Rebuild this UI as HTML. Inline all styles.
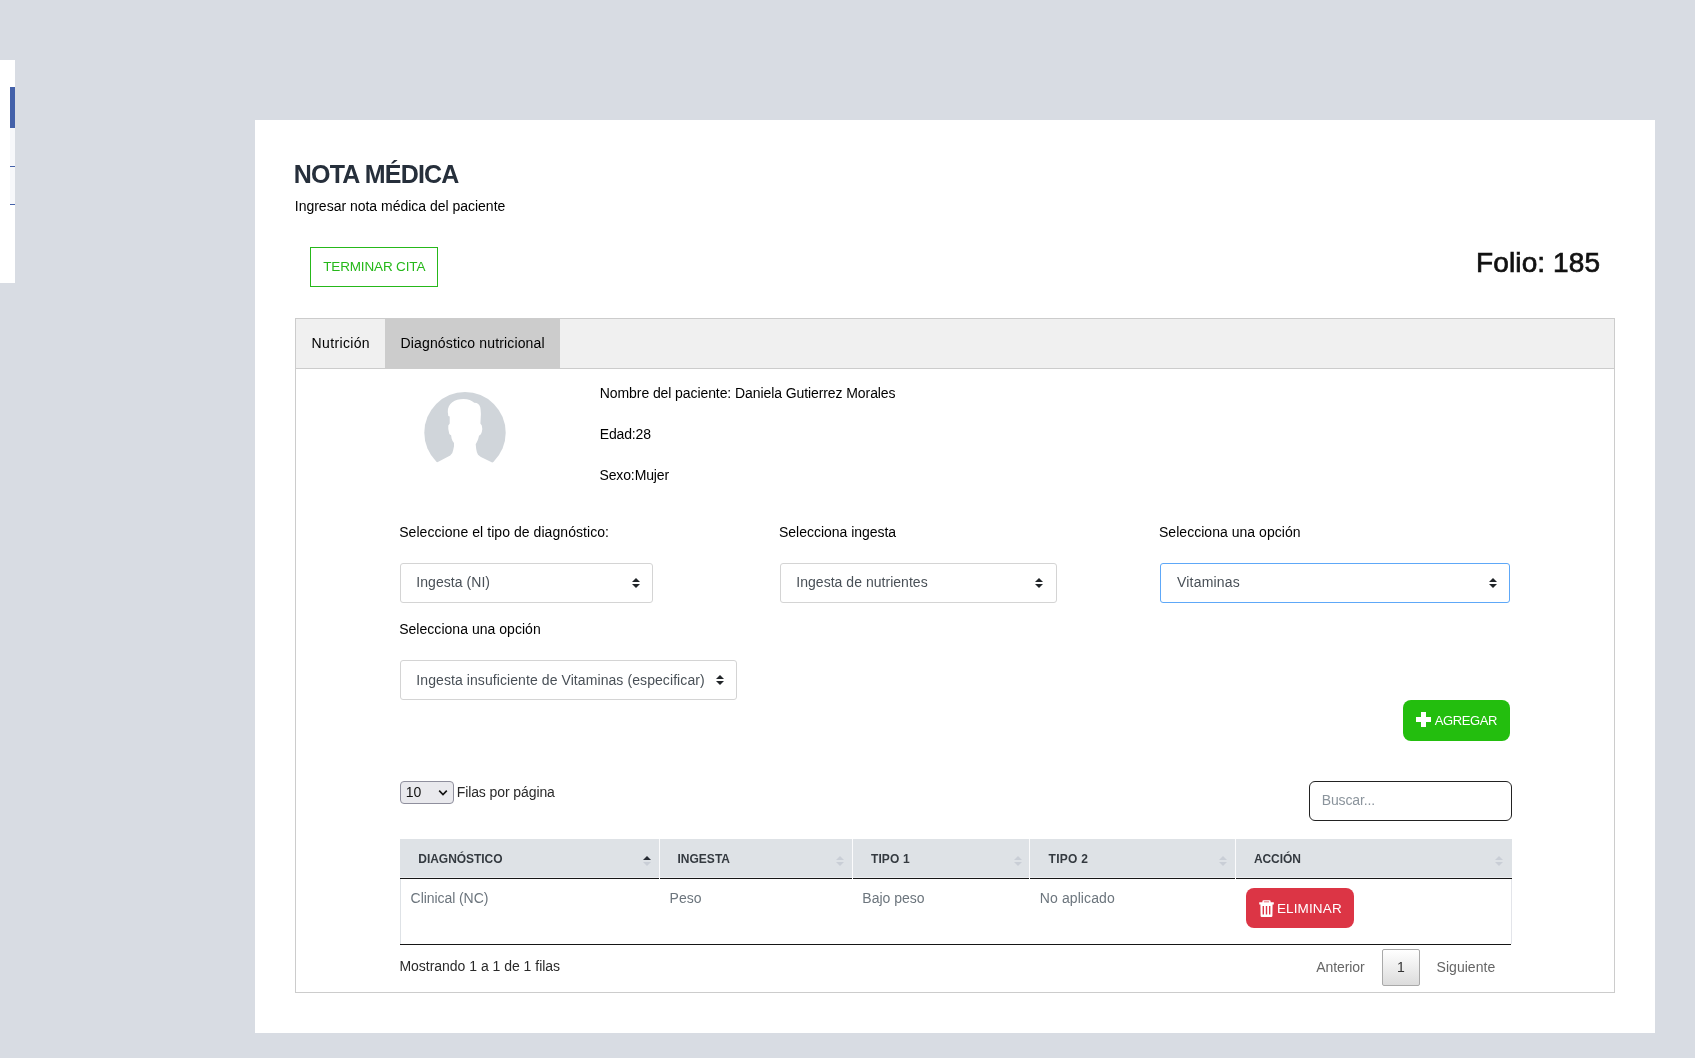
<!DOCTYPE html>
<html><head><meta charset="utf-8">
<style>
*{box-sizing:border-box;margin:0;padding:0}
html,body{width:1695px;height:1058px;overflow:hidden}
body{background:#d8dce3;font-family:"Liberation Sans",sans-serif;position:relative}
.a{position:absolute}
.t{position:absolute;white-space:nowrap;line-height:1}
.tu,.td{position:absolute;width:0;height:0;border-left-style:solid;border-right-style:solid;border-left-color:transparent;border-right-color:transparent}
</style></head><body>
<div class="a" style="left:0;top:60px;width:15px;height:223px;background:#fff"></div>
<div class="a" style="left:10px;top:87px;width:5px;height:41px;background:#4461a9"></div>
<div class="a" style="left:10px;top:128px;width:5px;height:77px;background:#f7f8fb"></div>
<div class="a" style="left:10px;top:166px;width:5px;height:1px;background:#4461a9"></div>
<div class="a" style="left:10px;top:204px;width:5px;height:1px;background:#4461a9"></div>
<div class="a" style="left:255px;top:120px;width:1400px;height:913px;background:#fff"></div>
<div class="a" style="left:310px;top:247px;width:128px;height:40px;border:1px solid #26b81a"></div>
<div class="a" style="left:295px;top:318px;width:1320px;height:675px;border:1px solid #cccccc"></div>
<div class="a" style="left:296px;top:319px;width:1318px;height:50px;background:#f0f0f0;border-bottom:1px solid #cccccc"></div>
<div class="a" style="left:385px;top:319px;width:175px;height:49px;background:#cccccc"></div>
<svg class="a" style="left:420px;top:388px" width="90" height="90" viewBox="0 0 90 90">
<defs><clipPath id="cc"><circle cx="45" cy="44.7" r="40.7"/></clipPath></defs>
<circle cx="45" cy="44.7" r="40.7" fill="#d0d5da"/>
<path fill="#fff" d="M17.4 74.2 L30.2 67.6 Q32.8 65.5 33.2 62 L34 58.2 L34 54.9 Q32 52.5 31.6 50.6 L31.1 47.3 Q29.4 46.5 29.2 45.5 L28.3 41.1 L28.3 37.4 L29.7 35.5 L29.7 28.4 L28.3 27.9 L27.8 24.1 C27.5 15 35 10.9 43.4 10.9 C48.5 10.9 51.5 12.5 54.3 14.7 L56.5 15 C59.3 16 60.4 18.5 60.6 21.5 L60.9 26 L60.4 35.5 L61.8 37.4 L62.3 41.1 Q62 44.5 60.9 46.3 L59 47.8 Q58.3 51 57.6 52.5 Q56.5 54.8 55.7 56.3 L56.2 61 Q56.8 65 58 66.7 L60.9 69 L72.7 74.7 L90 90 L0 90 Z"/>
</svg>
<div class="a" style="left:400px;top:563px;width:253px;height:40px;border:1px solid #d4d4d4;border-radius:3px;background:#fff"></div>
<div class="a" style="left:780px;top:563px;width:277px;height:40px;border:1px solid #d4d4d4;border-radius:3px;background:#fff"></div>
<div class="a" style="left:1160px;top:563px;width:350px;height:40px;border:1px solid #5ea8f8;border-radius:3px;background:#fff"></div>
<div class="a" style="left:400px;top:660px;width:337px;height:40px;border:1px solid #d4d4d4;border-radius:3px;background:#fff"></div>
<div class="tu" style="left:632px;top:578px;border-left-width:4.0px;border-right-width:4.0px;border-bottom:4px solid #212529"></div><div class="td" style="left:632px;top:584px;border-left-width:4.0px;border-right-width:4.0px;border-top:4px solid #212529"></div>
<div class="tu" style="left:1035px;top:578px;border-left-width:4.0px;border-right-width:4.0px;border-bottom:4px solid #212529"></div><div class="td" style="left:1035px;top:584px;border-left-width:4.0px;border-right-width:4.0px;border-top:4px solid #212529"></div>
<div class="tu" style="left:1489px;top:578px;border-left-width:4.0px;border-right-width:4.0px;border-bottom:4px solid #212529"></div><div class="td" style="left:1489px;top:584px;border-left-width:4.0px;border-right-width:4.0px;border-top:4px solid #212529"></div>
<div class="tu" style="left:716px;top:675px;border-left-width:4.0px;border-right-width:4.0px;border-bottom:4px solid #212529"></div><div class="td" style="left:716px;top:681px;border-left-width:4.0px;border-right-width:4.0px;border-top:4px solid #212529"></div>
<div class="a" style="left:1403px;top:700px;width:107px;height:41px;border-radius:8px;background:#23be0e"></div>
<div class="a" style="left:1416px;top:717px;width:15px;height:5px;background:#fff"></div>
<div class="a" style="left:1421px;top:712px;width:5px;height:15px;background:#fff"></div>
<div class="a" style="left:400px;top:781px;width:54px;height:23px;border:1px solid #8f8f9d;border-radius:4px;background:#e9e9ed"></div>
<svg class="a" style="left:438px;top:789px" width="10" height="8" viewBox="0 0 10 8"><path d="M1.2 1.6 L5 5.6 L8.8 1.6" fill="none" stroke="#111" stroke-width="1.6"/></svg>
<div class="a" style="left:1309px;top:781px;width:203px;height:40px;border:1px solid #222;border-radius:6px;background:#fff"></div>
<div class="a" style="left:400px;top:839px;width:1112px;height:39px;background:#dee2e6"></div>
<div class="a" style="left:400px;top:877px;width:1112px;height:1px;background:#eceef1"></div>
<div class="a" style="left:400px;top:878px;width:1112px;height:1px;background:#161616"></div>
<div class="a" style="left:659px;top:839px;width:1px;height:40px;background:#fbfbfc"></div>
<div class="a" style="left:852px;top:839px;width:1px;height:40px;background:#fbfbfc"></div>
<div class="a" style="left:1029px;top:839px;width:1px;height:40px;background:#fbfbfc"></div>
<div class="a" style="left:1235px;top:839px;width:1px;height:40px;background:#fbfbfc"></div>
<div class="tu" style="left:643px;top:856px;border-left-width:4.0px;border-right-width:4.0px;border-bottom:4px solid #262b33"></div><div class="td" style="left:643px;top:862px;border-left-width:4.0px;border-right-width:4.0px;border-top:4px solid #c9ced6"></div>
<div class="tu" style="left:836px;top:856px;border-left-width:4.0px;border-right-width:4.0px;border-bottom:4px solid #c9ced6"></div><div class="td" style="left:836px;top:862px;border-left-width:4.0px;border-right-width:4.0px;border-top:4px solid #c9ced6"></div>
<div class="tu" style="left:1014px;top:856px;border-left-width:4.0px;border-right-width:4.0px;border-bottom:4px solid #c9ced6"></div><div class="td" style="left:1014px;top:862px;border-left-width:4.0px;border-right-width:4.0px;border-top:4px solid #c9ced6"></div>
<div class="tu" style="left:1219px;top:856px;border-left-width:4.0px;border-right-width:4.0px;border-bottom:4px solid #c9ced6"></div><div class="td" style="left:1219px;top:862px;border-left-width:4.0px;border-right-width:4.0px;border-top:4px solid #c9ced6"></div>
<div class="tu" style="left:1495px;top:856px;border-left-width:4.0px;border-right-width:4.0px;border-bottom:4px solid #c9ced6"></div><div class="td" style="left:1495px;top:862px;border-left-width:4.0px;border-right-width:4.0px;border-top:4px solid #c9ced6"></div>
<div class="a" style="left:400px;top:879px;width:1px;height:65px;background:#dee2e6"></div>
<div class="a" style="left:1511px;top:879px;width:1px;height:65px;background:#e3e5ea"></div>
<div class="a" style="left:400px;top:944px;width:1111px;height:1px;background:#161616"></div>
<div class="a" style="left:1246px;top:888px;width:108px;height:40px;border-radius:8px;background:#dc3545"></div>
<svg class="a" style="left:1258px;top:899px" width="17" height="19" viewBox="0 0 17 19">
<path fill="#fff" fill-rule="evenodd" d="M5.5 1.2 L11.5 1.2 Q12.6 1.2 12.6 2.3 L12.6 3.2 L15.8 3.2 L15.8 5.5 L14.6 5.5 L14.4 17 Q14.3 18 13.3 18 L3.7 18 Q2.7 18 2.6 17 L2.4 5.5 L1.2 5.5 L1.2 3.2 L4.4 3.2 L4.4 2.3 Q4.4 1.2 5.5 1.2 Z M5.9 3.2 L11.1 3.2 L11.1 2.5 L5.9 2.5 Z M4.6 7 L4.6 15.5 L6 15.5 L6 7 Z M7.8 7 L7.8 15.5 L9.2 15.5 L9.2 7 Z M11 7 L11 15.5 L12.4 15.5 L12.4 7 Z"/>
</svg>
<div class="a" style="left:1382px;top:949px;width:38px;height:37px;border:1px solid #a9a9a9;border-radius:2px;background:linear-gradient(#ffffff,#dcdcdc)"></div>
<div style="position:absolute;left:0;top:0;width:1695px;height:1058px;will-change:transform">
<div class="t" style="left:293.8px;top:162.1px;font-size:25px;font-weight:bold;color:#262f3b;letter-spacing:-0.8px;">NOTA MÉDICA</div>
<div class="t" style="left:294.8px;top:198.7px;font-size:14px;font-weight:normal;color:#000000;letter-spacing:-0.013px;">Ingresar nota médica del paciente</div>
<div class="t" style="left:323.2px;top:260.2px;font-size:13.5px;font-weight:normal;color:#26b81a;letter-spacing:-0.15px;">TERMINAR CITA</div>
<div class="t" style="left:1476.1px;top:248.9px;font-size:28px;font-weight:normal;color:#111111;letter-spacing:0.111px;-webkit-text-stroke:0.7px #111111">Folio: 185</div>
<div class="t" style="left:311.6px;top:336.3px;font-size:14px;font-weight:normal;color:#000000;letter-spacing:0.349px;">Nutrición</div>
<div class="t" style="left:400.5px;top:336.3px;font-size:14px;font-weight:normal;color:#000000;letter-spacing:0.146px;">Diagnóstico nutricional</div>
<div class="t" style="left:599.8px;top:386.3px;font-size:14px;font-weight:normal;color:#000000;letter-spacing:-0.085px;">Nombre del paciente: Daniela Gutierrez Morales</div>
<div class="t" style="left:599.8px;top:427.1px;font-size:14px;font-weight:normal;color:#000000;letter-spacing:-0.167px;">Edad:28</div>
<div class="t" style="left:599.5px;top:468.0px;font-size:14px;font-weight:normal;color:#000000;letter-spacing:-0.134px;">Sexo:Mujer</div>
<div class="t" style="left:399.2px;top:524.8px;font-size:14px;font-weight:normal;color:#000000;letter-spacing:0.06px;">Seleccione el tipo de diagnóstico:</div>
<div class="t" style="left:779.0px;top:524.8px;font-size:14px;font-weight:normal;color:#000000;letter-spacing:-0.023px;">Selecciona ingesta</div>
<div class="t" style="left:1159.0px;top:524.8px;font-size:14px;font-weight:normal;color:#000000;letter-spacing:0.03px;">Selecciona una opción</div>
<div class="t" style="left:416.3px;top:575.2px;font-size:14px;font-weight:normal;color:#495057;letter-spacing:0.054px;">Ingesta (NI)</div>
<div class="t" style="left:796.3px;top:575.1px;font-size:14px;font-weight:normal;color:#495057;letter-spacing:0.03px;">Ingesta de nutrientes</div>
<div class="t" style="left:1177.0px;top:575.0px;font-size:14px;font-weight:normal;color:#495057;letter-spacing:0.199px;">Vitaminas</div>
<div class="t" style="left:399.2px;top:622.2px;font-size:14px;font-weight:normal;color:#000000;letter-spacing:0.03px;">Selecciona una opción</div>
<div class="t" style="left:416.3px;top:673.2px;font-size:14px;font-weight:normal;color:#495057;letter-spacing:0.083px;">Ingesta insuficiente de Vitaminas (especificar)</div>
<div class="t" style="left:1434.8px;top:713.9px;font-size:13px;font-weight:normal;color:#ffffff;letter-spacing:-0.4px;">AGREGAR</div>
<div class="t" style="left:405.8px;top:784.9px;font-size:14px;font-weight:normal;color:#111111;letter-spacing:0.0px;">10</div>
<div class="t" style="left:456.7px;top:785.0px;font-size:14px;font-weight:normal;color:#2a2a2a;letter-spacing:-0.093px;">Filas por página</div>
<div class="t" style="left:1321.7px;top:793.0px;font-size:14px;font-weight:normal;color:#8b949c;letter-spacing:-0.124px;">Buscar...</div>
<div class="t" style="left:418.3px;top:852.9px;font-size:12px;font-weight:bold;color:#343a40;letter-spacing:-0.04px;">DIAGNÓSTICO</div>
<div class="t" style="left:677.4px;top:852.9px;font-size:12px;font-weight:bold;color:#343a40;letter-spacing:0.033px;">INGESTA</div>
<div class="t" style="left:870.9px;top:852.9px;font-size:12px;font-weight:bold;color:#343a40;letter-spacing:0.16px;">TIPO 1</div>
<div class="t" style="left:1048.6px;top:852.9px;font-size:12px;font-weight:bold;color:#343a40;letter-spacing:0.28px;">TIPO 2</div>
<div class="t" style="left:1253.9px;top:852.9px;font-size:12px;font-weight:bold;color:#343a40;letter-spacing:-0.08px;">ACCIÓN</div>
<div class="t" style="left:410.6px;top:891.1px;font-size:14px;font-weight:normal;color:#6c757d;letter-spacing:-0.067px;">Clinical (NC)</div>
<div class="t" style="left:669.5px;top:891.1px;font-size:14px;font-weight:normal;color:#6c757d;letter-spacing:0.067px;">Peso</div>
<div class="t" style="left:862.3px;top:891.1px;font-size:14px;font-weight:normal;color:#6c757d;letter-spacing:0.0px;">Bajo peso</div>
<div class="t" style="left:1039.8px;top:891.1px;font-size:14px;font-weight:normal;color:#6c757d;letter-spacing:0.1px;">No aplicado</div>
<div class="t" style="left:1276.9px;top:902.0px;font-size:13.5px;font-weight:normal;color:#ffffff;letter-spacing:0.142px;">ELIMINAR</div>
<div class="t" style="left:399.4px;top:959.3px;font-size:14px;font-weight:normal;color:#2a2a2a;letter-spacing:-0.016px;">Mostrando 1 a 1 de 1 filas</div>
<div class="t" style="left:1316.2px;top:960.0px;font-size:14px;font-weight:normal;color:#666666;letter-spacing:-0.086px;">Anterior</div>
<div class="t" style="left:1397.0px;top:959.8px;font-size:14px;font-weight:normal;color:#333333;letter-spacing:-0.4px;">1</div>
<div class="t" style="left:1436.6px;top:960.0px;font-size:14px;font-weight:normal;color:#666666;letter-spacing:0.026px;">Siguiente</div>
</div>
</body></html>
